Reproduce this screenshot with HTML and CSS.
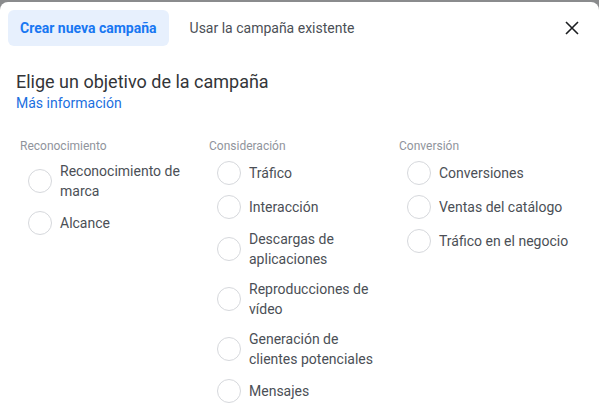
FILE: index.html
```html
<!DOCTYPE html>
<html lang="es">
<head>
<meta charset="utf-8">
<link rel="stylesheet" href="styles.css">
</head>
<body>
<div class="modal">
  <div class="tabs">
    <div class="tab tab-active">Crear nueva campaña</div>
    <div class="tab">Usar la campaña existente</div>
    <div class="close">
      <svg width="14" height="14" viewBox="0 0 14 14"><path d="M1 1 L13 13 M13 1 L1 13" stroke="#1c1e21" stroke-width="1.6" fill="none"/></svg>
    </div>
  </div>
  <div class="content">
    <h1 class="title">Elige un objetivo de la campaña</h1>
    <a class="more">Más información</a>
    <div class="columns">
      <div class="col">
        <div class="col-head">Reconocimiento</div>
        <div class="item"><span class="radio"></span><span class="label">Reconocimiento de marca</span></div>
        <div class="item"><span class="radio"></span><span class="label">Alcance</span></div>
      </div>
      <div class="col">
        <div class="col-head">Consideración</div>
        <div class="item"><span class="radio"></span><span class="label">Tráfico</span></div>
        <div class="item"><span class="radio"></span><span class="label">Interacción</span></div>
        <div class="item"><span class="radio"></span><span class="label">Descargas de aplicaciones</span></div>
        <div class="item"><span class="radio"></span><span class="label">Reproducciones de vídeo</span></div>
        <div class="item"><span class="radio"></span><span class="label">Generación de clientes potenciales</span></div>
        <div class="item"><span class="radio"></span><span class="label">Mensajes</span></div>
      </div>
      <div class="col">
        <div class="col-head">Conversión</div>
        <div class="item"><span class="radio"></span><span class="label">Conversiones</span></div>
        <div class="item"><span class="radio"></span><span class="label">Ventas del catálogo</span></div>
        <div class="item"><span class="radio"></span><span class="label">Tráfico en el negocio</span></div>
      </div>
    </div>
  </div>
</div>
</body>
</html>
```
FILE: styles.css
```css
html, body {
  margin: 0;
  padding: 0;
  height: 100%;
  overflow: hidden;
}
body {
  background: #8a8b8d;
  font-family: Roboto, "Liberation Sans", sans-serif;
  color: #1c1e21;
}
.modal {
  margin-top: 2px;
  height: 402px;
  background: #fff;
  border-radius: 8px 8px 0 0;
}
.tabs {
  display: flex;
  align-items: center;
  gap: 9px;
  padding: 8px 15px 0 8px;
}
.tab {
  height: 36px;
  line-height: 36px;
  padding: 0 12px;
  font-size: 14px;
  color: #4b4f56;
  border-radius: 6px;
}
.tab-active {
  background: #e7f0fd;
  color: #1877f2;
  font-weight: 700;
}
.close {
  margin-left: auto;
  width: 24px;
  height: 24px;
  display: flex;
  align-items: center;
  justify-content: center;
}
.content {
  padding: 0 16px;
}
.title {
  margin: 24px 0 0;
  font-size: 18px;
  line-height: 24px;
  font-weight: 400;
  color: #333538;
}
.more {
  display: block;
  font-size: 14px;
  line-height: 18px;
  color: #1b6fe0;
}
.columns {
  display: grid;
  grid-template-columns: 189px 190px 190px;
  padding-left: 4px;
  margin-top: 26px;
}
.col-head {
  font-size: 12px;
  line-height: 16px;
  color: #90949c;
  margin-bottom: 2px;
}
.item {
  display: flex;
  align-items: center;
  padding: 5px 0 5px 8px;
}
.radio {
  flex: none;
  width: 22px;
  height: 22px;
  border: 1px solid #d6d8dc;
  border-radius: 50%;
  margin-right: 8px;
}
.label {
  width: 136px;
  font-size: 14px;
  line-height: 20px;
  color: #4b4f56;
}
```
